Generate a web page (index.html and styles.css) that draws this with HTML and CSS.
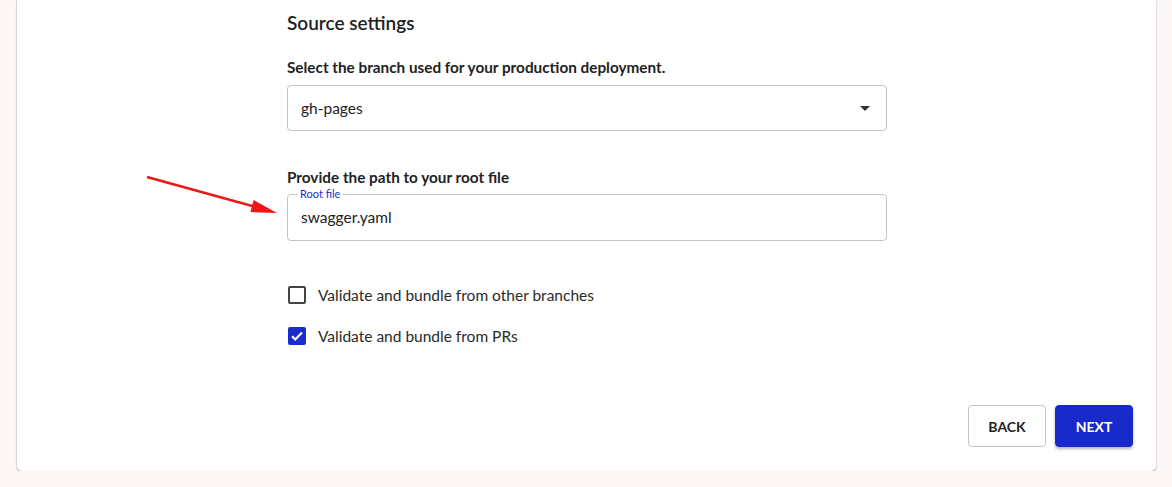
FILE: index.html
```html
<!DOCTYPE html>
<html>

    <head>
        <title>Source settings</title>
        <link rel="stylesheet" href="styles.css">
    </head>

    <body>
        <div class="card">
            <div class="form">
                <h2>Source settings</h2>

                <div class="field">
                    <label class="field-label">Select the branch used for your production deployment.</label>
                    <div class="select">
                        <span>gh-pages</span>
                        <span class="caret"></span>
                    </div>
                </div>

                <div class="field">
                    <label class="field-label">Provide the path to your root file</label>
                    <fieldset class="input">
                        <legend>Root file</legend>
                        <span>swagger.yaml</span>
                    </fieldset>
                </div>

                <div class="checks">
                    <label class="check">
                        <span class="box"></span>
                        Validate and bundle from other branches
                    </label>
                    <label class="check">
                        <span class="box checked">
                            <svg viewBox="0 0 18 18" width="18" height="18">
                                <path d="M4 9.2l3.3 3.2L14 5.6" fill="none" stroke="#fff" stroke-width="2.2" />
                            </svg>
                        </span>
                        Validate and bundle from PRs
                    </label>
                </div>
            </div>

            <div class="actions">
                <button class="btn">Back</button>
                <button class="btn primary">Next</button>
            </div>

            <!-- annotation arrow -->
            <svg class="arrow" width="150" height="60" viewBox="0 0 150 60">
                <line x1="7" y1="7" x2="116" y2="37" stroke="#f01414" stroke-width="2.4" />
                <polygon points="137,43 113.6,30 110.4,42" fill="#f01414" />
            </svg>
        </div>
    </body>

</html>
```

FILE: styles.css
```css
body {
    margin: 0;
    background: #fcf6f6;
    font-family: Lato, "Noto Sans", sans-serif;
    color: #222;
}

.card {
    position: relative;
    margin: 0 16px 0 17px;
    height: 471px;
    background: #fff;
    border-radius: 0 0 5px 5px;
    box-shadow: 0 1px 2px rgba(0, 0, 0, 0.35), -1px 0 0 #f0eaea;
}

.form {
    width: 600px;
    margin-left: 270px;
    padding-top: 11px;
}

h2 {
    margin: 0 0 22px;
    font-size: 19px;
    font-weight: 600;
    line-height: 24px;
}

.field {
    margin-bottom: 36px;
}

.field-label {
    display: block;
    font-size: 15.3px;
    font-weight: 700;
    line-height: 20px;
    margin-bottom: 8px;
}

.select {
    height: 44px;
    border: 1px solid #c4c4c4;
    border-radius: 4px;
    display: flex;
    align-items: center;
    justify-content: space-between;
    padding: 0 14px 0 13px;
    font-size: 15.5px;
}

.caret {
    width: 0;
    height: 0;
    border-left: 5px solid transparent;
    border-right: 5px solid transparent;
    border-top: 5px solid #333;
    margin-right: 2px;
}

.field:nth-child(3) {
    margin-bottom: 0;
}

.field:nth-child(3) .field-label {
    margin-bottom: 2px;
}

.input {
    margin: 0;
    box-sizing: border-box;
    height: 52px;
    border: 1px solid #c4c4c4;
    border-radius: 4px;
    padding: 0 13px;
    font-size: 15.5px;
    display: block;
}

.input legend {
    font-size: 11px;
    color: #1a2ccc;
    padding: 0 3px;
    margin-left: -4px;
    line-height: 10px;
}

.input span {
    display: block;
    line-height: 26px;
    margin-top: 5px;
}

.checks {
    margin-top: 45px;
    display: flex;
    flex-direction: column;
    gap: 23px;
}

.check {
    display: flex;
    align-items: center;
    gap: 12px;
    font-size: 15.5px;
    line-height: 18px;
    color: #2a2a2a;
    margin-left: 1px;
}

.box {
    width: 14px;
    height: 14px;
    border: 2px solid #444;
    border-radius: 2px;
    display: flex;
}

.box.checked {
    width: 18px;
    height: 18px;
    border: 0;
    background: #1a2ccc;
}

.actions {
    position: absolute;
    right: 23px;
    bottom: 24px;
    display: flex;
    gap: 9px;
}

.btn {
    width: 78px;
    height: 42px;
    font-family: inherit;
    font-size: 14px;
    font-weight: 700;
    text-transform: uppercase;
    background: #fff;
    color: #222;
    border: 1px solid #c4c4c4;
    border-radius: 4px;
    cursor: pointer;
}

.btn.primary {
    background: #1729c8;
    color: #fff;
    border-color: #1729c8;
    box-shadow: 0 2px 3px rgba(0, 0, 0, 0.3);
}

.arrow {
    position: absolute;
    left: 123px;
    top: 170px;
}
```
